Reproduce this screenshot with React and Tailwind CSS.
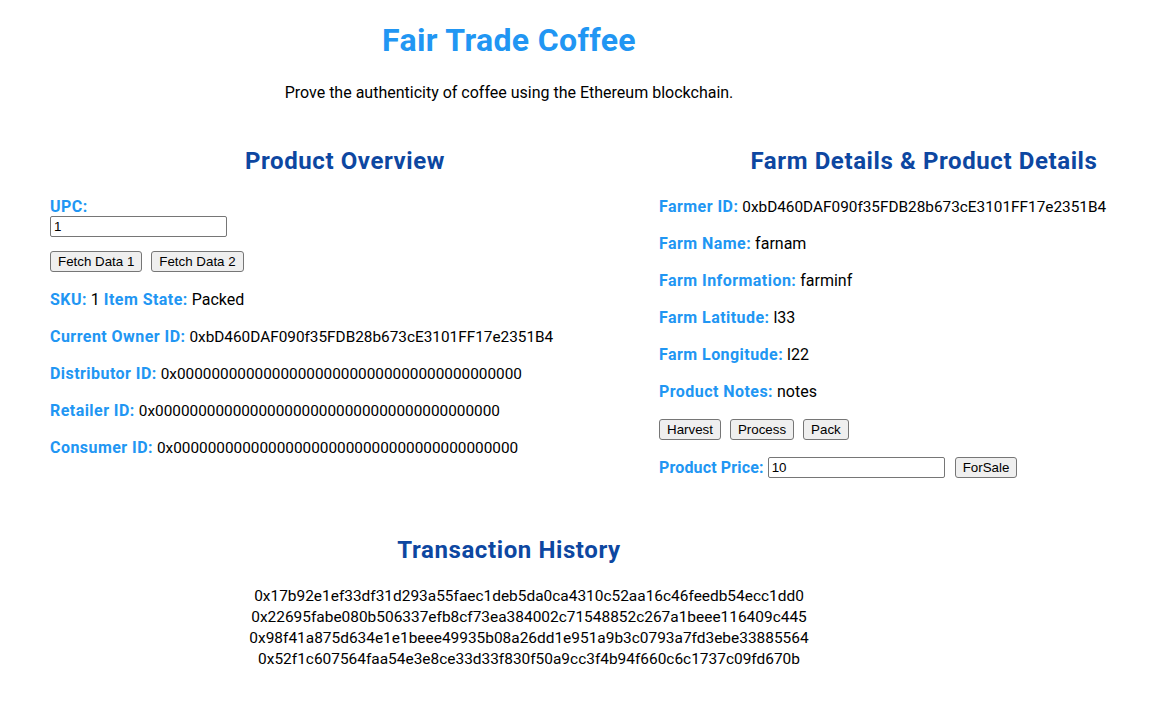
const labelCls = "font-bold text-[#2196F3] tracking-[0.45px]";

const btnCls =
  "h-[21px] px-[7px] border border-[#767676] rounded-[3px] bg-[#efefef] text-[13.33px] leading-[15px] text-black font-['Liberation_Sans',Arial,sans-serif]";

const inputCls =
  "h-[21px] w-[177px] px-[3px] border border-[#767676] rounded-[2px] bg-white text-[13.33px] text-black font-['Liberation_Sans',Arial,sans-serif]";

const hashes = [
  "0x17b92e1ef33df31d293a55faec1deb5da0ca4310c52aa16c46feedb54ecc1dd0",
  "0x22695fabe080b506337efb8cf73ea384002c71548852c267a1beee116409c445",
  "0x98f41a875d634e1e1beee49935b08a26dd1e951a9b3c0793a7fd3ebe33885564",
  "0x52f1c607564faa54e3e8ce33d33f830f50a9cc3f4b94f660c6c1737c09fd670b",
];

function Field({ label, value, hex = false }) {
  return (
    <p className="h-[21px] leading-[21px] whitespace-nowrap">
      <span className={labelCls}>{label}</span>{" "}
      <span className={hex ? "text-[15.35px]" : ""}>{value}</span>
    </p>
  );
}

export default function App() {
  return (
    <div className="w-full min-h-screen overflow-hidden bg-white text-black text-[16px] font-['Roboto','Segoe_UI',sans-serif]">
      <header className="w-[1018px] text-center">
        <h1 className="pt-[19px] text-[32px] leading-[43px] font-bold tracking-[0.35px] text-[#2196F3]">
          Fair Trade Coffee
        </h1>
        <p className="mt-[20px] leading-[21px]">
          Prove the authenticity of coffee using the Ethereum blockchain.
        </p>
      </header>

      <div className="flex mt-[42px]">
        {/* left: product overview */}
        <section className="w-[640px] shrink-0 pl-[50px]">
          <h2 className="text-center text-[24px] leading-[32px] font-bold tracking-[0.6px] text-[#0D47A1]">
            Product Overview
          </h2>
          <div className="mt-[19px]">
            <label className={`${labelCls} block leading-[21px]`}>UPC:</label>
            <input className={`${inputCls} block -mt-[1px]`} defaultValue="1" />
          </div>
          <div className="mt-[14px] flex gap-[9px]">
            <button className={btnCls}>Fetch Data 1</button>
            <button className={btnCls}>Fetch Data 2</button>
          </div>
          <div className="mt-[17px] flex flex-col gap-[16px]">
            <p className="h-[21px] leading-[21px]">
              <span className={labelCls}>SKU:</span> 1{" "}
              <span className={labelCls}>Item State:</span> Packed
            </p>
            <Field label="Current Owner ID:" value="0xbD460DAF090f35FDB28b673cE3101FF17e2351B4" hex />
            <Field label="Distributor ID:" value="0x0000000000000000000000000000000000000000" hex />
            <Field label="Retailer ID:" value="0x0000000000000000000000000000000000000000" hex />
            <Field label="Consumer ID:" value="0x0000000000000000000000000000000000000000" hex />
          </div>
        </section>

        {/* right: farm + product details */}
        <section className="w-[530px] shrink-0 ml-[19px]">
          <h2 className="text-center text-[24px] leading-[32px] font-bold tracking-[0.6px] text-[#0D47A1]">
            Farm Details &amp; Product Details
          </h2>
          <div className="mt-[19px] flex flex-col gap-[16px]">
            <Field label="Farmer ID:" value="0xbD460DAF090f35FDB28b673cE3101FF17e2351B4" hex />
            <Field label="Farm Name:" value="farnam" />
            <Field label="Farm Information:" value="farminf" />
            <Field label="Farm Latitude:" value="l33" />
            <Field label="Farm Longitude:" value="l22" />
            <Field label="Product Notes:" value="notes" />
          </div>
          <div className="mt-[17px] flex gap-[9px]">
            <button className={btnCls}>Harvest</button>
            <button className={btnCls}>Process</button>
            <button className={btnCls}>Pack</button>
          </div>
          <div className="mt-[17px] flex items-center leading-[21px]">
            <span className="font-bold text-[#2196F3] tracking-[0.15px]">Product Price:</span>
            <input className={`${inputCls} ml-[4px]`} defaultValue="10" />
            <button className={`${btnCls} ml-[10px]`}>ForSale</button>
          </div>
        </section>
      </div>

      <section className="w-[1018px] mt-[56px] pb-[40px]">
        <h2 className="text-center text-[24px] leading-[32px] font-bold tracking-[0.6px] text-[#0D47A1]">
          Transaction History
        </h2>
        <ul className="mt-[20px] pl-[40px] text-center text-[15.45px]">
          {hashes.map((h) => (
            <li key={h} className="leading-[21px]">
              {h}
            </li>
          ))}
        </ul>
      </section>
    </div>
  );
}
